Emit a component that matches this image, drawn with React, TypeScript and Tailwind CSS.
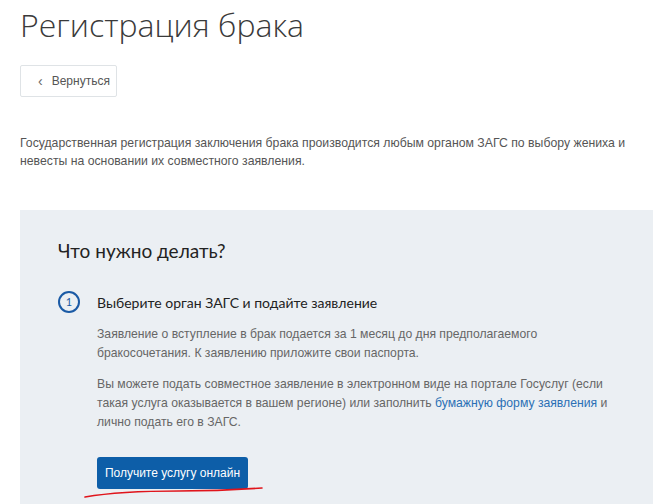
export default function App() {
  return (
    <div className="w-[670px] h-[504px] overflow-hidden bg-white font-['Liberation_Sans',Arial,sans-serif]">
      <div className="pl-5 pr-[17px]">
        <h1 className="pt-[5px] text-[32px] leading-[40px] font-light text-[#3a3a3a] font-['Open_Sans',sans-serif]">
          Регистрация брака
        </h1>

        <button className="mt-5 flex items-center h-8 w-[97px] border border-[#dfe3e6] rounded-[2px] bg-white text-[12px] text-[#555]">
          <span className="pl-[17px] pr-[9px] text-[14px] leading-none text-[#666]">‹</span>
          Вернуться
        </button>

        <p className="mt-[37px] text-[12.25px] leading-[18px] text-[#555]">
          Государственная регистрация заключения брака производится любым органом ЗАГС по выбору жениха и
          невесты на основании их совместного заявления.
        </p>

        <div className="mt-[40px] bg-[#ebeff3] pl-[38px] pr-[30px] pt-[29px] pb-10">
          <h2 className="text-[19px] leading-[24px] text-[#222] font-['Lato',sans-serif]">Что нужно делать?</h2>

          <div className="mt-[28px] flex items-center gap-[17px]">
            <div className="w-[22px] h-[22px] rounded-full border-2 border-[#1a5aa5] flex items-center justify-center text-[11px] text-[#1a5aa5] font-['Lato',sans-serif]">
              1
            </div>
            <div className="text-[14px] text-[#222] font-['Lato',sans-serif]">Выберите орган ЗАГС и подайте заявление</div>
          </div>

          <div className="pl-[39px] text-[12.2px] leading-[19px] text-[#666]">
            <p className="mt-[12px]">
              Заявление о вступление в брак подается за 1 месяц до дня предполагаемого
              <br />
              бракосочетания. К заявлению приложите свои паспорта.
            </p>
            <p className="mt-[12px]">
              Вы можете подать совместное заявление в электронном виде на портале Госуслуг (если
              <br />
              такая услуга оказывается в вашем регионе) или заполнить{' '}
              <a className="text-[#2a6fb5]">бумажную форму заявления</a> и
              <br />
              лично подать его в ЗАГС.
            </p>

            <div className="relative mt-[25px] inline-block">
              <button className="h-[32px] w-[151px] rounded-[3px] bg-[#0d5ea8] text-white text-[12px]">
                Получите услугу онлайн
              </button>
              <svg className="absolute left-[-13px] top-[28px]" width="180" height="14" viewBox="0 0 180 14">
                <path d="M1 12 C 30 7, 60 6, 95 6 C 120 6, 150 5, 178 3" fill="none" stroke="#e0141b" strokeWidth="1.6" strokeLinecap="round" />
              </svg>
            </div>
          </div>
        </div>
      </div>
    </div>
  );
}
